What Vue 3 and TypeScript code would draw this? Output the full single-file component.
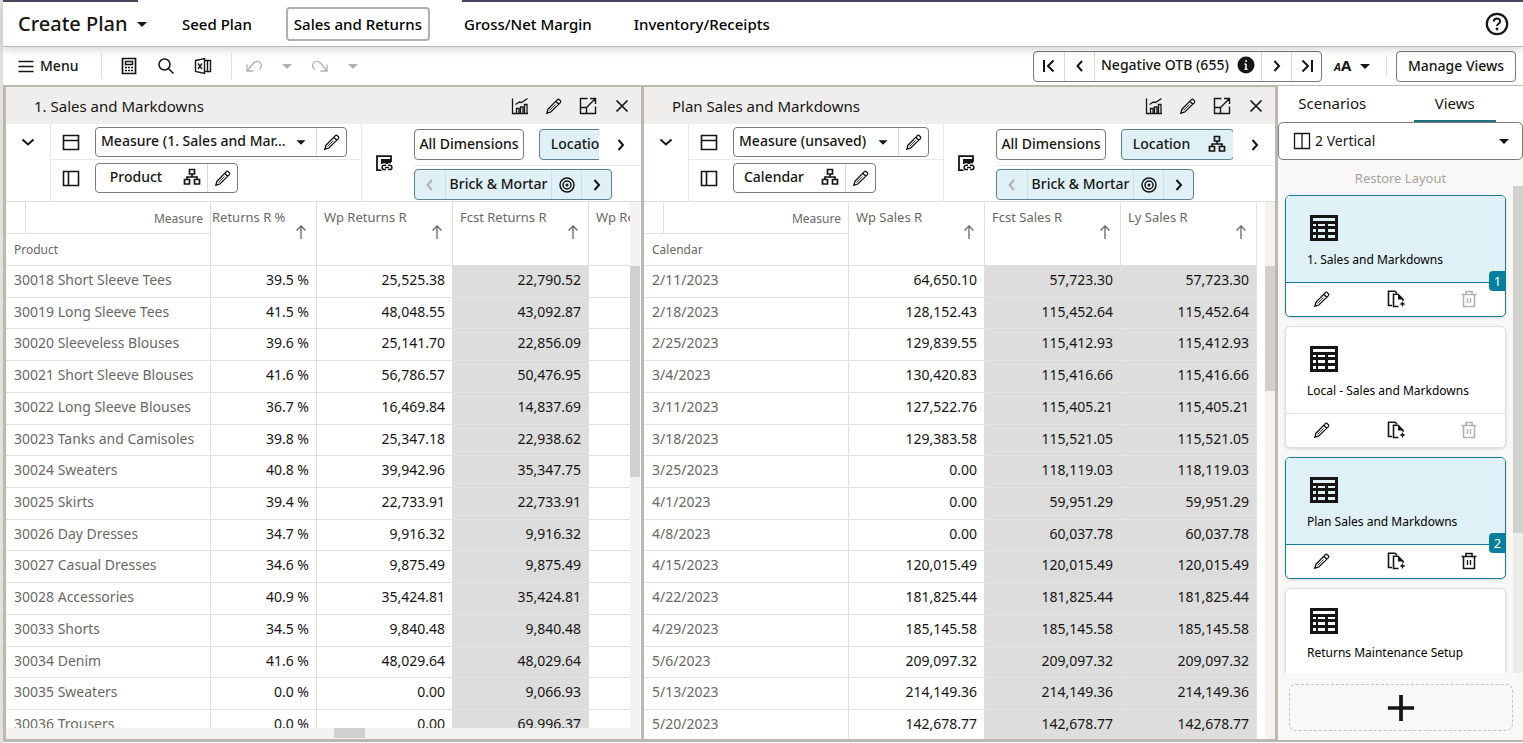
<script setup lang="ts">
import { h, ref } from 'vue'

const icons: Record<string, string> = {
  menu: '<path d="M2.500 5.500h15M2.500 10.500h15M2.500 15.500h15"/>',
  caret: '<path class="solid" d="M5 8h10l-5 5z"/>',
  calc: '<path d="M3.500 2.500h13v15h-13z" stroke-width="1.700"/><path d="M6.500 5.500h7v3h-7z"/><path d="M6 11.500h2M9 11.500h2M12 11.500h2M6 14.500h2M9 14.500h2M12 14.500h2" stroke-width="1.500"/>',
  search: '<circle cx="8.500" cy="8.500" r="5.500"/><path d="M12.500 12.500l5 5"/>',
  excel: '<path d="M2.500 4.500l9-2v15l-9-2zM11.500 4.500h6v11h-6M14.500 4.500v11" stroke-width="1.400"/><path d="M5 7.500l4 5.500M9 7.500L5 13" stroke-width="1.300"/>',
  undo: '<path d="M3 8.500v6.500h6.500M3.500 14.500L9.500 7c2-2.200 5.500-2.200 7 0 1.300 2 1 4.500-1 6.500" stroke-width="1.300"/>',
  redo: '<path d="M17 8.500v6.500h-6.500M16.500 14.500L10.500 7c-2-2.200-5.500-2.200-7 0-1.300 2-1 4.500 1 6.500" stroke-width="1.300"/>',
  first: '<path d="M5 4v12M14.500 4.500L9 10l5.500 5.500" stroke-width="2"/>',
  last: '<path d="M15 4v12M5.500 4.500L11 10l-5.500 5.500" stroke-width="2"/>',
  prev: '<path d="M12 5l-4.500 5 4.500 5" stroke-width="2"/>',
  next: '<path d="M7.500 5l4.500 5-4.500 5" stroke-width="2"/>',
  down: '<path d="M4.500 7.500l5.500 5 5.500-5" stroke-width="2"/>',
  close: '<path d="M4.500 4.500l11 11M15.500 4.500l-11 11" stroke-width="1.700"/>',
  info: '<circle class="solid" cx="10" cy="10" r="8.500"/><path d="M10 9v5M8.500 9H10M8.500 14.200h3" stroke="#fff"/><circle cx="10" cy="6" r="1" fill="#fff" stroke="none"/>',
  help: '<circle cx="12" cy="12" r="10.200" stroke-width="2.200"/><path d="M8.800 9.500c0-4 6.400-4 6.400-.2 0 2.500-3.200 2.300-3.200 4.700" stroke-width="2"/><circle class="solid" cx="12" cy="17" r="1.400"/>',
  chart: '<path d="M2.500 2.500v15h15.500M6.500 17v-4.500h2.500V17M10.500 17v-6H13v6M14.500 17V8.500H17V17M5.500 8.500l4-2.500 2 .5 6-4" stroke-width="1.300"/>',
  pencil: '<path d="M2.800 17.200l1.200-4L13.400 3.600q.9-.8 1.800 0l1.200 1.200q.8.900 0 1.800L6.800 16zM11.800 5.200l3 3" stroke-width="1.300"/><path d="M11.500 8.500l-6 6" stroke-width=".8"/>',
  expand: '<path d="M9.500 2.500h-7v15h15v-7M2.500 11.500h6v6M12 2.500h5.500V8M17 3l-8.500 8.500" stroke-width="1.400"/>',
  tree: '<path d="M7.500 2.500h5v4.500h-5zM2.500 12.500h5V17h-5zM12.500 12.500h5V17h-5zM10 7v3M5 12.500V10h10v2.500" stroke-width="1.700"/>',
  top: '<path d="M2.500 3.500h15v14h-15zM2.500 8.500h15" stroke-width="1.600"/>',
  side: '<path d="M2.500 3.500h15v14h-15zM7.500 3.500v14" stroke-width="1.600"/>',
  split: '<path d="M2.500 2.500h15v15h-15zM10 2.500v15" stroke-width="1.300"/>',
  link: '<path d="M8 17.200H3V3.200h14V9" stroke-width="1.800"/><path class="solid" d="M7 6h10v5H7z"/><path d="M11.500 12.200h-1.200a2.200 2.200 0 0 0 0 4.400h1.200M14 12.200h1.700a2.200 2.200 0 0 1 0 4.400H14M10.500 14.400h5" stroke="#fff" stroke-width="4"/><path d="M12 12.200h-1.700a2.200 2.200 0 0 0 0 4.400H12M14 12.200h1.700a2.200 2.200 0 0 1 0 4.400H14M11 14.400h4" stroke-width="1.500"/>',
  target: '<circle cx="10" cy="10" r="7"/><circle cx="10" cy="10" r="4"/><circle class="solid" cx="10" cy="10" r="1.500"/>',
  up: '<path d="M10 17V4M5.500 8.500L10 4l4.500 4.500" stroke-width="1.300"/>',
  copy: '<path d="M6 16.500H2.500v-14.300H9L11 4M12.500 17.500H7.500V5.300H12l5 5v1.500" stroke-width="1.600"/><path class="solid" d="M12 5v5.500h5.500zM16.500 12l.9 2.100 2.100.9-2.100.9-.9 2.100-.9-2.100-2.100-.9 2.100-.9z"/>',
  trash: '<path d="M2.500 5.500h15M7 5.500v-3h6v3M4.500 5.500v12h11v-12" stroke-width="1.600"/><path d="M8.500 9v5M11.500 9v5" stroke-width="1.400"/>',
  grid: '<path class="solid" fill-rule="evenodd" d="M1 2h28v26H1zM4 5v3h22V5zM4 11v2h3v-2zM9 11v2h7v-2zM19 11v2h7v-2zM4 16v3h3v-3zM9 16v3h7v-3zM19 16v3h7v-3zM4 22v3h3v-3zM9 22v3h7v-3zM19 22v3h7v-3z"/>',
  plus: '<path d="M15 1v28M1 15h28" stroke-width="4"/>',
}
const boxes: Record<string, string> = { help: '0 0 24 24', grid: '0 0 30 30', plus: '0 0 30 30' }

const Icon = (props: { name: string }) =>
  h('svg', {
    class: ['icon', 'icon-' + props.name],
    viewBox: boxes[props.name] ?? '0 0 20 20',
    'aria-hidden': 'true',
    innerHTML: icons[props.name],
  })
Icon.props = ['name']

interface Column { label: string; width: number; shaded?: boolean }
interface Panel {
  title: string
  measure: string
  dimension: string
  clipped: boolean
  columns: Column[]
  rows: string[][]
}

const panels: Panel[] = [
  {
    title: '1. Sales and Markdowns',
    measure: 'Measure (1. Sales and Mar...',
    dimension: 'Product',
    clipped: true,
    columns: [
      { label: 'Returns R %', width: 106 },
      { label: 'Wp Returns R', width: 136 },
      { label: 'Fcst Returns R', width: 136, shaded: true },
      { label: 'Wp Returns C', width: 136 },
    ],
    rows: [
      ['30018 Short Sleeve Tees', '39.5 %', '25,525.38', '22,790.52', ''],
      ['30019 Long Sleeve Tees', '41.5 %', '48,048.55', '43,092.87', ''],
      ['30020 Sleeveless Blouses', '39.6 %', '25,141.70', '22,856.09', ''],
      ['30021 Short Sleeve Blouses', '41.6 %', '56,786.57', '50,476.95', ''],
      ['30022 Long Sleeve Blouses', '36.7 %', '16,469.84', '14,837.69', ''],
      ['30023 Tanks and Camisoles', '39.8 %', '25,347.18', '22,938.62', ''],
      ['30024 Sweaters', '40.8 %', '39,942.96', '35,347.75', ''],
      ['30025 Skirts', '39.4 %', '22,733.91', '22,733.91', ''],
      ['30026 Day Dresses', '34.7 %', '9,916.32', '9,916.32', ''],
      ['30027 Casual Dresses', '34.6 %', '9,875.49', '9,875.49', ''],
      ['30028 Accessories', '40.9 %', '35,424.81', '35,424.81', ''],
      ['30033 Shorts', '34.5 %', '9,840.48', '9,840.48', ''],
      ['30034 Denim', '41.6 %', '48,029.64', '48,029.64', ''],
      ['30035 Sweaters', '0.0 %', '0.00', '9,066.93', ''],
      ['30036 Trousers', '0.0 %', '0.00', '69,996.37', ''],
    ],
  },
  {
    title: 'Plan Sales and Markdowns',
    measure: 'Measure (unsaved)',
    dimension: 'Calendar',
    clipped: false,
    columns: [
      { label: 'Wp Sales R', width: 136 },
      { label: 'Fcst Sales R', width: 136, shaded: true },
      { label: 'Ly Sales R', width: 136, shaded: true },
    ],
    rows: [
      ['2/11/2023', '64,650.10', '57,723.30', '57,723.30'],
      ['2/18/2023', '128,152.43', '115,452.64', '115,452.64'],
      ['2/25/2023', '129,839.55', '115,412.93', '115,412.93'],
      ['3/4/2023', '130,420.83', '115,416.66', '115,416.66'],
      ['3/11/2023', '127,522.76', '115,405.21', '115,405.21'],
      ['3/18/2023', '129,383.58', '115,521.05', '115,521.05'],
      ['3/25/2023', '0.00', '118,119.03', '118,119.03'],
      ['4/1/2023', '0.00', '59,951.29', '59,951.29'],
      ['4/8/2023', '0.00', '60,037.78', '60,037.78'],
      ['4/15/2023', '120,015.49', '120,015.49', '120,015.49'],
      ['4/22/2023', '181,825.44', '181,825.44', '181,825.44'],
      ['4/29/2023', '185,145.58', '185,145.58', '185,145.58'],
      ['5/6/2023', '209,097.32', '209,097.32', '209,097.32'],
      ['5/13/2023', '214,149.36', '214,149.36', '214,149.36'],
      ['5/20/2023', '142,678.77', '142,678.77', '142,678.77'],
    ],
  },
]

const tabs = ['Seed Plan', 'Sales and Returns', 'Gross/Net Margin', 'Inventory/Receipts']
const activeTab = ref('Sales and Returns')

const views = [
  { title: '1. Sales and Markdowns', badge: '1', removable: false },
  { title: 'Local - Sales and Markdowns', badge: '', removable: false },
  { title: 'Plan Sales and Markdowns', badge: '2', removable: true },
  { title: 'Returns Maintenance Setup', badge: '', removable: true },
]
</script>

<template>
  <div class="page">
    <header class="header">
      <div class="stripe"><i class="stripe-a"></i><i class="stripe-b"></i></div>
      <button class="plan-menu">Create Plan <Icon name="caret" /></button>
      <nav class="tabs">
        <button v-for="t in tabs" :key="t" :class="['tab', { active: t === activeTab }]" @click="activeTab = t">{{ t }}</button>
      </nav>
      <button class="help" aria-label="Help"><Icon name="help" /></button>
    </header>

    <div class="toolbar">
      <button class="menu"><Icon name="menu" />Menu</button>
      <div class="tools">
        <button aria-label="Calculator"><Icon name="calc" /></button>
        <button aria-label="Search"><Icon name="search" /></button>
        <button aria-label="Excel"><Icon name="excel" /></button>
      </div>
      <div class="history">
        <button aria-label="Undo" disabled><Icon name="undo" /></button>
        <button aria-label="Undo list" disabled><Icon name="caret" /></button>
        <button aria-label="Redo" disabled><Icon name="redo" /></button>
        <button aria-label="Redo list" disabled><Icon name="caret" /></button>
      </div>
      <div class="pager">
        <button aria-label="First"><Icon name="first" /></button>
        <button aria-label="Previous"><Icon name="prev" /></button>
        <span class="pager-text">Negative OTB (655) <Icon name="info" /></span>
        <button aria-label="Next"><Icon name="next" /></button>
        <button aria-label="Last"><Icon name="last" /></button>
      </div>
      <button class="font-size" aria-label="Text size"><small>A</small><b>A</b><Icon name="caret" /></button>
      <button class="manage">Manage Views</button>
    </div>

    <main class="workspace">
      <section v-for="p in panels" :key="p.title" class="panel">
        <div class="panel-head">
          <h2>{{ p.title }}</h2>
          <div class="actions">
            <button aria-label="Chart"><Icon name="chart" /></button>
            <button aria-label="Edit"><Icon name="pencil" /></button>
            <button aria-label="Maximize"><Icon name="expand" /></button>
            <button aria-label="Close"><Icon name="close" /></button>
          </div>
        </div>

        <div class="dims">
          <button class="collapse" aria-label="Collapse"><Icon name="down" /></button>
          <div class="axes">
            <div class="axis">
              <Icon name="top" />
              <div class="pill">
                <select :aria-label="'Measure for ' + p.title" :class="['measure', { wide: p.clipped }]"><option>{{ p.measure }}</option></select>
                <Icon name="caret" class="measure-caret" />
                <button class="edit" aria-label="Edit measure"><Icon name="pencil" /></button>
              </div>
            </div>
            <div class="axis">
              <Icon name="side" />
              <div class="pill">
                <button class="dimension"><span>{{ p.dimension }}</span><Icon name="tree" /></button>
                <button class="edit" aria-label="Edit dimension"><Icon name="pencil" /></button>
              </div>
            </div>
          </div>
          <div class="linker"><Icon name="link" /></div>
          <div class="filters">
            <div class="filter-row">
              <button class="all">All Dimensions</button>
              <div class="location-clip">
                <button class="location"><span>Location</span><Icon name="tree" /></button>
              </div>
              <button class="more" aria-label="More"><Icon name="next" /></button>
            </div>
            <div class="filter-row second">
              <div class="brick">
                <button aria-label="Previous member" disabled><Icon name="prev" /></button>
                <span>Brick &amp; Mortar</span>
                <button aria-label="Locate"><Icon name="target" /></button>
                <button aria-label="Next member"><Icon name="next" /></button>
              </div>
            </div>
          </div>
        </div>

        <div :class="['sheet', { clipped: p.clipped }]">
          <div class="viewport">
            <table>
              <colgroup>
                <col class="col-head" />
                <col v-for="c in p.columns" :key="c.label" :style="{ width: c.width + 'px' }" />
              </colgroup>
              <thead>
                <tr>
                  <th class="corner">
                    <div class="corner-top"><span>Measure</span></div>
                    <div class="corner-bottom">{{ p.dimension }}</div>
                  </th>
                  <th v-for="c in p.columns" :key="c.label" scope="col" :class="['col-title', { narrow: c.width < 136 }]">
                    <span>{{ c.label }}</span>
                    <Icon name="up" />
                  </th>
                </tr>
              </thead>
              <tbody>
                <tr v-for="r in p.rows" :key="r[0]">
                  <th scope="row">{{ r[0] }}</th>
                  <td v-for="(c, i) in p.columns" :key="c.label" :class="{ shaded: c.shaded }">{{ r[i + 1] }}</td>
                </tr>
              </tbody>
            </table>
          </div>
          <div class="vbar"><i></i></div>
          <div v-if="p.clipped" class="hbar"><i></i></div>
        </div>
      </section>

      <aside class="sidebar">
        <nav class="side-tabs">
          <button>Scenarios</button>
          <button class="active">Views</button>
        </nav>
        <label class="layout">
          <Icon name="split" />
          <select aria-label="Layout"><option>2 Vertical</option></select>
          <Icon name="caret" />
        </label>
        <button class="restore" disabled>Restore Layout</button>
        <div class="list">
          <div class="cards">
            <article v-for="v in views" :key="v.title" :class="['card', { chosen: v.badge }]">
              <div class="card-top">
                <Icon name="grid" />
                <h3>{{ v.title }}</h3>
              </div>
              <div class="card-foot">
                <button aria-label="Edit view"><Icon name="pencil" /></button>
                <button aria-label="Copy view"><Icon name="copy" /></button>
                <button aria-label="Delete view" :disabled="!v.removable"><Icon name="trash" /></button>
              </div>
              <span v-if="v.badge" class="badge">{{ v.badge }}</span>
            </article>
          </div>
          <div class="side-bar"><i></i></div>
        </div>
        <button class="add" aria-label="Add view"><Icon name="plus" /></button>
      </aside>
    </main>
  </div>
</template>

<style>
body { overflow: hidden; }
.icon { width: 20px; height: 20px; flex: none; fill: none; stroke: currentColor; stroke-width: 1.5; }
.icon .solid { fill: currentColor; stroke: none; }
</style>

<style scoped>
* { box-sizing: border-box; }
.page {
  height: 100vh;
  display: flex;
  flex-direction: column;
  border-left: 3px solid #e4e1dd;
  padding-bottom: 1px;
  background: #fff;
  color: #161513;
  font: 500 14px/20px "Noto Sans", "Open Sans", sans-serif;
}
button, select {
  font: inherit;
  color: inherit;
  background: none;
  border: 0;
  padding: 0;
  margin: 0;
  appearance: none;
  cursor: pointer;
}
button { display: flex; align-items: center; justify-content: center; white-space: nowrap; }
button:disabled { color: #b3b1af; cursor: default; }
h2, h3 { margin: 0; font: inherit; }
i { display: block; }

.header {
  position: relative;
  z-index: 1;
  height: 47px;
  flex: none;
  display: flex;
  align-items: center;
  background: #fff;
  border-bottom: 1px solid #bab8b6;
  box-shadow: 0 3px 8px rgba(0, 0, 0, 0.16);
  padding: 2px 14px 0 15px;
}
.stripe { position: absolute; left: 0; right: 0; top: 0; height: 2px; display: flex; gap: 324px; }
.stripe-a { width: 135px; background: #47475e; }
.stripe-b { flex: 1; background: #47475e; }
.plan-menu { font-size: 20px; line-height: 28px; width: 134px; justify-content: space-between; }
.tabs { display: flex; gap: 26px; margin-left: 22px; }
.tab { height: 34px; padding: 0 7px; border: 1px solid transparent; border-radius: 4px; font-size: 15px; color: #000; }
.tab.active { border: 2px solid #b3b1ad; padding: 0 6px; }
.help { margin-left: auto; }
.help .icon { width: 24px; height: 24px; }

.toolbar { height: 38px; flex: none; display: flex; align-items: center; padding: 0 7px 0 13px; }
.menu { gap: 4px; width: 85px; justify-content: flex-start; height: 24px; }
.tools { display: flex; gap: 17px; border-left: 1px solid #e2e0de; border-right: 1px solid #e2e0de; height: 26px; align-items: center; padding: 0 17px; width: 131px; }
.history { display: flex; gap: 13px; padding-left: 12px; }
.pager { margin-left: auto; display: flex; height: 31px; border: 1px solid #7d7b79; border-radius: 4px; }
.pager button { width: 30px; }
.pager > * + * { border-left: 1px solid #dcdad8; }
.pager-text { display: flex; align-items: center; justify-content: space-between; width: 167px; padding: 0 5px 2px 6px; white-space: nowrap; }
.font-size { align-items: baseline; width: 65px; height: 22px; padding-left: 12px; justify-content: flex-start; border-right: 1px solid #e2e0de; }
.font-size small { font: italic 700 11px/20px "Noto Sans", sans-serif; }
.font-size b { font: 700 15px/20px "Noto Sans", sans-serif; }
.font-size .icon { align-self: center; margin-left: 4px; }
.manage { width: 120px; height: 31px; margin-left: 9px; border: 1px solid #7d7b79; border-radius: 4px; }

.workspace {
  flex: 1;
  min-height: 0;
  display: grid;
  grid-template-columns: minmax(0, 635fr) minmax(0, 631fr) 245px;
  column-gap: 3px;
  background: #bbb7b1;
  padding: 2px 0 3px 3px;
}
.panel { display: flex; flex-direction: column; min-height: 0; background: #fff; }
.panel-head { height: 37px; flex: none; display: flex; align-items: center; justify-content: space-between; background: #f0eeed; padding: 0 9px 0 28px; font-size: 15px; font-weight: 400; }
.actions { display: flex; gap: 14px; }

.dims { height: 78px; flex: none; display: flex; border-bottom: 1px solid #dedcda; }
.collapse { width: 44px; height: 35px; }
.axes { border-left: 1px solid #ebe9e7; border-right: 1px solid #ebe9e7; }
.axis { display: flex; align-items: center; height: 36px; padding: 0 14px 0 10px; gap: 14px; border-bottom: 1px solid #ebe9e7; }
.axis + .axis { border-bottom: 0; }
.pill { display: flex; align-items: stretch; height: 30px; border: 1px solid #7d7b79; border-radius: 4px; }
.measure { width: 164px; padding: 0 0 2px 5px; white-space: nowrap; }
.measure.wide { width: 220px; }
.measure-caret { align-self: center; width: 18px; margin: 0 6px 0 -24px; pointer-events: none; }
.edit { width: 30px; border-left: 1px solid #dcdad8; }
.dimension { width: 111px; padding: 0 5px 2px 0; gap: 6px; }
.dimension span, .location span { flex: 1; text-align: center; }
.linker { width: 44px; display: flex; align-items: center; justify-content: center; }
.filters { flex: 1; min-width: 0; padding-left: 8px; }
.filter-row { display: flex; height: 42px; align-items: center; border-bottom: 1px solid #ebe9e7; }
.filter-row.second { height: 35px; border: 0; align-items: flex-start; padding-top: 3px; }
.all { width: 110px; height: 31px; flex: none; border: 1px solid #7d7b79; border-radius: 4px; padding-bottom: 1px; }
.location-clip { flex: 1; min-width: 0; overflow: hidden; margin-left: 15px; border-right: 1px solid #fff; }
.location { width: 113px; height: 31px; border: 1px solid #5f7f8c; border-radius: 4px; background: #dff0f7; padding: 0 6px 1px 0; gap: 6px; }
.more { width: 41px; height: 30px; flex: none; }
.brick { display: flex; height: 31px; width: 198px; border: 1px solid #5f7f8c; border-radius: 4px; background: #dff0f7; line-height: 27px; }
.brick button { width: 30px; }
.brick span { flex: 1; text-align: center; }
.brick > * + * { border-left: 1px solid #cfdfe5; }

.sheet { flex: 1; min-height: 0; display: grid; grid-template-columns: minmax(0, 1fr) 10px; grid-template-rows: minmax(0, 1fr); }
.sheet.clipped { grid-template-rows: minmax(0, 1fr) 11px; padding-right: 1px; }
.viewport { overflow: hidden; }
table { border-collapse: separate; border-spacing: 0; table-layout: fixed; width: 0; font-weight: 400; }
.col-head { width: 205px; }
th, td { padding: 0 7px 3px; border-bottom: 1px solid #e2e0de; border-right: 1px solid #e2e0de; white-space: nowrap; font-weight: 400; }
tbody tr { height: 32px; }
tbody tr:nth-child(7n + 2), tbody tr:nth-child(7n + 6) { height: 31px; }
tbody th { text-align: left; color: #6a6764; padding-left: 8px; overflow: hidden; }
td { text-align: right; }
.shaded { background: #dddddd; border-bottom-color: #e5e4e3; }
.corner { padding: 0; height: 64px; color: #6a6764; font-size: 12px; }
.corner-top { height: 32px; border-bottom: 1px solid #e2e0de; padding-left: 19px; text-align: right; }
.corner-top span { display: block; height: 31px; padding: 7px 7px 0 0; border-left: 1px solid #e2e0de; }
.corner-bottom { height: 31px; text-align: left; padding: 6px 0 0 8px; }
.col-title { vertical-align: top; padding: 5px 5px 0 7px; color: #6a6764; text-align: left; font-size: 13px; }
.col-title span { display: block; height: 15px; }
.narrow { padding-left: 1px; }
.col-title .icon { display: block; margin: 0 0 0 auto; }
.vbar { background: #f3f2f1; padding-top: 64px; }
.vbar i { height: 125px; background: #d2d0cf; }
.clipped .vbar i { height: 211px; }
.hbar { grid-column: 1 / -1; background: #f3f2f1; padding-left: 328px; }
.hbar i { width: 31px; height: 10px; background: #d2d0cf; }

.sidebar { display: flex; flex-direction: column; min-height: 0; background: #faf8f7; margin: -1px 0 -1px 0; font-weight: 400; }
.side-tabs { display: grid; grid-template-columns: 1fr 1fr; height: 36px; flex: none; background: #fff; font-size: 15px; }
.side-tabs button { border-bottom: 2px solid transparent; margin: 0 27px 0 13px; }
.side-tabs .active { border-color: #1f7286; }
.layout { display: flex; align-items: center; height: 38px; flex: none; border: 1px solid #7d7b79; border-radius: 5px; background: #fff; padding: 0 8px 0 13px; }
.layout select { flex: 1; padding-left: 3px; }
.restore { height: 26px; flex: none; padding-top: 10px; font-size: 13px; }
.restore:disabled { color: #a5a3a1; }
.list { flex: 1; min-height: 0; display: flex; justify-content: space-between; overflow: hidden; }
.cards { flex: 1; padding: 9px 7px 0; display: flex; flex-direction: column; gap: 9px; }
.card { position: relative; flex: none; height: 122px; border: 1px solid #e0dedc; border-radius: 5px; background: #fff; overflow: hidden; box-shadow: 0 1px 3px rgba(0, 0, 0, 0.14); }
.card-top { height: 87px; border-bottom: 1px solid #e0dedc; padding: 17px 0 0 21px; }
.card-top .icon { display: block; width: 30px; height: 30px; margin-left: 2px; }
.card h3 { font-size: 12px; line-height: 16px; margin-top: 9px; color: #000; }
.card-foot { display: flex; height: 32px; align-items: center; justify-content: space-between; padding: 0 26px; }
.chosen { border-color: #167a97; }
.chosen .card-top { background: #e0f0f7; border-color: #167a97; }
.badge { position: absolute; right: -1px; top: 75px; width: 17px; height: 20px; border-radius: 4px 0 0 4px; background: #067f9f; color: #fff; font-size: 13px; text-align: center; }
.side-bar { width: 10px; background: #eeecea; flex: none; }
.side-bar i { height: 347px; background: #d2d0cf; }
.add { height: 47px; flex: none; margin: 11px 10px 9px 11px; border: 1px dashed #c4c1be; border-radius: 7px; }
.add .icon { width: 28px; height: 28px; }
</style>
